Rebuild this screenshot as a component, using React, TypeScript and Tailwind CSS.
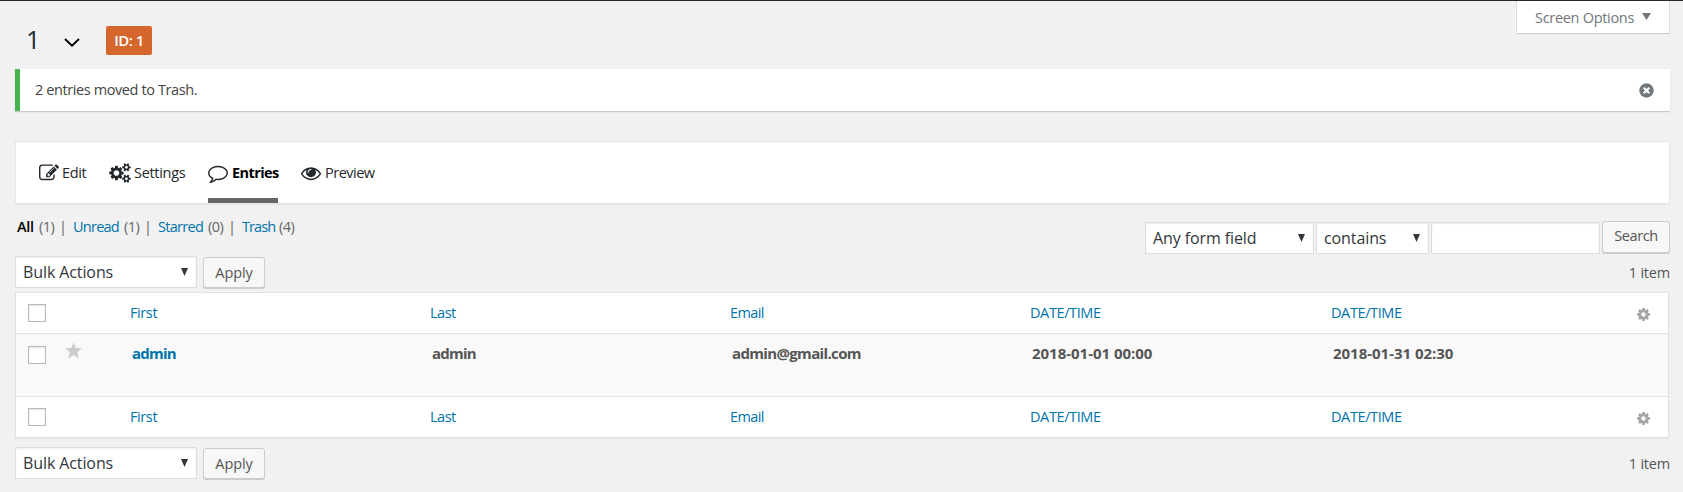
import React from "react";

const columns = [
  { label: "First", value: "admin", link: true, head: "tracking-[-0.4px]", cell: "tracking-[-0.8px]" },
  { label: "Last", value: "admin", link: false, head: "tracking-[-0.5px]", cell: "tracking-[-0.8px]" },
  { label: "Email", value: "admin@gmail.com", link: false, head: "tracking-[-0.6px]", cell: "tracking-[-0.65px]" },
  { label: "DATE/TIME", value: "2018-01-01 00:00", link: false, head: "tracking-[-0.4px]", cell: "tracking-[-0.02px]" },
  { label: "DATE/TIME", value: "2018-01-31 02:30", link: false, head: "tracking-[-0.4px]", cell: "tracking-[-0.02px]" },
];

const icons = {
  edit: "M888 1184l116-116-152-152-116 116v56h96v96h56zm440-720q-16-16-33 1l-350 350q-17 17-1 33t33-1l350-350q17-17 1-33zm80 594v190q0 119-84.5 203.5t-203.5 84.5h-832q-119 0-203.5-84.5t-84.5-203.5v-832q0-119 84.5-203.5t203.5-84.5h832q63 0 117 25 15 7 18 23 3 17-9 29l-49 49q-14 14-32 8-23-6-45-6h-832q-66 0-113 47t-47 113v832q0 66 47 113t113 47h832q66 0 113-47t47-113v-126q0-13 9-22l64-64q15-15 35-7t20 29zm-96-738l288 288-672 672h-288v-288zm444 132l-92 92-288-288 92-92q28-28 68-28t68 28l152 152q28 28 28 68t-28 68z",
  cogs: "M896 896q0-106-75-181t-181-75-181 75-75 181 75 181 181 75 181-75 75-181zm768 512q0-52-38-90t-90-38-90 38-38 90q0 53 37.5 90.5t90.5 37.5 90.5-37.5 37.5-90.5zm0-1024q0-52-38-90t-90-38-90 38-38 90q0 53 37.5 90.5t90.5 37.5 90.5-37.5 37.5-90.5zm-384 421v185q0 10-7 19.5t-16 10.5l-155 24q-11 35-32 76 34 48 90 115 7 11 7 20 0 12-7 19-23 30-82.5 89.5t-78.5 59.5q-11 0-21-7l-115-90q-37 19-77 31-11 108-23 155-7 24-30 24h-186q-11 0-20-7.5t-10-17.5l-23-153q-34-10-75-31l-118 89q-7 7-20 7-11 0-21-8-144-133-144-160 0-9 7-19 10-14 41-53t47-61q-23-44-35-82l-152-24q-10-1-17-9.5t-7-19.5v-185q0-10 7-19.5t16-10.5l155-24q11-35 32-76-34-48-90-115-7-11-7-20 0-12 7-20 22-30 82-89t79-59q11 0 21 7l115 90q34-18 77-32 11-108 23-154 7-24 30-24h186q11 0 20 7.5t10 17.5l23 153q34 10 75 31l118-89q8-7 20-7 11 0 21 8 144 133 144 160 0 8-7 19-12 16-42 54t-45 60q23 48 34 82l152 23q10 2 17 10.5t7 19.5zm640 533v140q0 16-149 31-12 27-30 52 51 113 51 138 0 4-4 7-122 71-124 71-8 0-46-47t-52-68q-20 2-30 2t-30-2q-14 21-52 68t-46 47q-2 0-124-71-4-3-4-7 0-25 51-138-18-25-30-52-149-15-149-31v-140q0-16 149-31 13-29 30-52-51-113-51-138 0-4 4-7 4-2 35-20t59-34 30-16q8 0 46 46.5t52 67.5q20-2 30-2t30 2q51-71 92-112l6-2q4 0 124 70 4 3 4 7 0 25-51 138 17 23 30 52 149 15 149 31zm0-1024v140q0 16-149 31-12 27-30 52 51 113 51 138 0 4-4 7-122 71-124 71-8 0-46-47t-52-68q-20 2-30 2t-30-2q-14 21-52 68t-46 47q-2 0-124-71-4-3-4-7 0-25 51-138-18-25-30-52-149-15-149-31v-140q0-16 149-31 13-29 30-52-51-113-51-138 0-4 4-7 4-2 35-20t59-34 30-16q8 0 46 46.5t52 67.5q20-2 30-2t30 2q51-71 92-112l6-2q4 0 124 70 4 3 4 7 0 25-51 138 17 23 30 52 149 15 149 31z",
  comment: "M896 384q-204 0-381.5 69.5t-282 187.5-104.5 255q0 112 71.5 213.5t201.5 175.5l87 50-27 96q-24 91-70 172 152-63 275-171l43-38 57 6q69 8 130 8 204 0 381.5-69.5t282-187.5 104.5-255-104.5-255-282-187.5-381.5-69.5zm896 512q0 174-120 321.5t-326 233-450 85.5q-70 0-145-8-198 175-460 242-49 14-114 22h-5q-15 0-27-10.5t-16-27.5v-1q-3-4-.5-12t2-10 4.5-9.5l6-9 7-8.5 8-9q7-8 31-34.5t34.5-38 31-39.5 32.5-51 27-59 26-76q-157-89-247.5-220t-90.5-281q0-174 120-321.5t326-233 450-85.5 450 85.5 326 233 120 321.5z",
  eye: "M1664 960q-152-236-381-353 61 104 61 225 0 185-131.5 316.5t-316.5 131.5-316.5-131.5-131.5-316.5q0-121 61-225-229 117-381 353 133 205 333.5 326.5t434.5 121.5 434.5-121.5 333.5-326.5zm-720-384q0-20-14-34t-34-14q-125 0-214.5 89.5t-89.5 214.5q0 20 14 34t34 14 34-14 14-34q0-86 61-147t147-61q20 0 34-14t14-34zm848 384q0 34-20 69-140 230-376.5 368.5t-499.5 138.5-499.5-139-376.5-368q-20-35-20-69t20-69q140-229 376.5-368t499.5-139 499.5 139 376.5 368q20 35 20 69z",
  cog: "M1152 896q0-106-75-181t-181-75-181 75-75 181 75 181 181 75 181-75 75-181zm512-109v222q0 12-8 23t-20 13l-185 28q-19 54-39 91 35 50 107 138 10 12 10 25t-9 23q-27 37-99 108t-94 71q-12 0-26-9l-138-108q-44 23-91 38-16 136-29 186-7 28-36 28h-222q-14 0-24.5-8.5t-11.5-21.5l-28-184q-49-16-90-37l-141 107q-10 9-25 9-14 0-25-11-126-114-165-168-7-10-7-23 0-12 8-23 15-21 51-66.5t54-70.5q-27-50-41-99l-183-27q-13-2-21-12.5t-8-23.5v-222q0-12 8-23t19-13l186-28q14-46 39-92-40-57-107-138-10-12-10-24 0-10 9-23 26-36 98.5-107.5t94.5-71.5q13 0 26 10l138 107q44-23 91-38 16-136 29-186 7-28 36-28h222q14 0 24.5 8.5t11.5 21.5l28 184q49 16 90 37l142-107q9-9 24-9 13 0 25 10 129 119 165 170 7 8 7 22 0 12-8 23-15 21-51 66.5t-54 70.5q26 50 41 98l183 28q13 2 21 12.5t8 23.5z",
};

function Icon({ name, viewBox = "0 0 1792 1792", className }: { name: keyof typeof icons; viewBox?: string; className: string }) {
  return (
    <svg viewBox={viewBox} className={`shrink-0 ${className}`}>
      <path d={icons[name]} fill="currentColor" />
    </svg>
  );
}

function Caret({ className }: { className: string }) {
  return (
    <svg viewBox="0 0 10 8" preserveAspectRatio="none" className={className}>
      <path d="M0 0H10L5 8Z" fill="currentColor" />
    </svg>
  );
}

function SelectBox({ label, width }: { label: string; width: string }) {
  return (
    <div
      className={`flex h-8 shrink-0 items-center justify-between border border-[#ddd] bg-white pl-[7px] pr-[8px] text-[16px] tracking-[-0.1px] text-[#32373c] shadow-[inset_0_1px_2px_rgba(0,0,0,0.07)] ${width}`}
    >
      <span className="whitespace-nowrap">{label}</span>
      <Caret className="h-2 w-[7px]" />
    </div>
  );
}

function Button({ label, className }: { label: string; className: string }) {
  return (
    <button
      className={`shrink-0 rounded-[3px] border border-[#ccc] bg-[#f7f7f7] text-center text-[14.5px] leading-[28px] text-[#555] shadow-[0_1px_0_#ccc] ${className}`}
    >
      {label}
    </button>
  );
}

function Check() {
  return <div className="ml-3 h-[18px] w-[18px] shrink-0 border border-[#b4b9be] bg-white shadow-[inset_0_1px_2px_rgba(0,0,0,0.1)]" />;
}

function LabelRow() {
  return (
    <div className="flex h-10 items-start bg-white">
      <div className="mt-[11px] w-[114px]"><Check /></div>
      {columns.map((c, i) => (
        <div key={i} className={`mt-[10px] text-[#0073aa] ${i < 3 ? "w-[300px]" : "w-[301px]"} ${c.head}`}>{c.label}</div>
      ))}
      <Icon name="cog" viewBox="128 128 1536 1536" className="ml-[5px] mt-[15px] h-[13px] w-[13px] text-[#a6a6a6]" />
    </div>
  );
}

function BulkBar() {
  return (
    <div className="flex h-[33px] items-start">
      <SelectBox label="Bulk Actions" width="w-[182px]" />
      <Button label="Apply" className="ml-[6px] mt-px h-[31px] w-[62px] tracking-[-0.1px]" />
      <div className="ml-auto mt-[6px] leading-[22px] tracking-[-0.2px] text-[#555]">1 item</div>
    </div>
  );
}

function Filter({ name, count, nameClass, last = false }: { name: string; count: number; nameClass: string; last?: boolean }) {
  return (
    <div className="flex">
      <span className={nameClass}>{name}</span>
      <span className="w-5 tracking-[-0.6px] text-[#666]">({count})</span>
      {!last && <span className="w-[14px] text-[#666]">|</span>}
    </div>
  );
}

export default function App() {
  return (
    <div className="h-[492px] overflow-hidden border-t border-[#23282d] bg-[#f1f1f1] pl-[15px] pr-[13px] font-['Open_Sans',sans-serif] text-[14.5px] leading-5 text-[#444]">
      <header className="flex h-[68px] items-start">
        <h1 className="ml-[11px] mt-[22px] w-[38px] text-[25px] font-normal leading-8 text-[#23282d]">1</h1>
        <svg viewBox="0 0 16 9" className="mt-[37px] h-[9px] w-4 text-black">
          <path d="M1 1L8 7.6L15 1" fill="none" stroke="currentColor" strokeWidth="1.9" />
        </svg>
        <div className="ml-[26px] mt-[25px] h-[29px] w-[46px] rounded-[2px] bg-[#d5672c] text-center text-[15px] font-semibold leading-[28px] tracking-[-0.5px] text-white">ID: 1</div>
        <div className="ml-auto flex h-[33px] w-[154px] items-center border border-t-0 border-[#ddd] border-b-[#ccc] bg-white pl-[18px] pt-px text-[#72777c]">
          <span className="w-[107px] whitespace-nowrap tracking-[-0.3px]">Screen Options</span>
          <Caret className="-mt-[3px] h-[7px] w-[9px]" />
        </div>
      </header>

      <div className="flex h-[42px] items-start border-l-[5px] border-[#46b450] bg-white pl-[15px] pr-4 shadow-[0_1px_1px_rgba(0,0,0,0.16)]">
        <span className="mt-[11px] tracking-[-0.4px]">2 entries moved to Trash.</span>
        <svg viewBox="0 0 16 16" className="ml-auto mt-[14px] h-[15px] w-[15px]">
          <circle cx="8" cy="8" r="7.7" fill="#72777c" />
          <path d="M5 5L11 11M11 5L5 11" stroke="#fff" strokeWidth="2.4" />
        </svg>
      </div>

      <nav className="mt-[30px] flex h-[63px] border border-[#e5e5e5] bg-white pl-[22px] text-[#23282d] shadow-[0_1px_1px_rgba(0,0,0,0.04)]">
        <div className="flex w-[71px] items-start">
          <Icon name="edit" className="ml-px mt-[21px] h-5 w-5" />
          <span className="ml-[3px] mt-[21px] tracking-[-0.4px]">Edit</span>
        </div>
        <div className="flex w-[99px] items-start">
          <Icon name="cogs" viewBox="0 0 1920 1792" className="mt-[21px] h-5 w-[22px]" />
          <span className="ml-[3px] mt-[21px] tracking-[-0.3px]">Settings</span>
        </div>
        <div className="flex w-[70px] items-start border-b-[5px] border-[#666]">
          <Icon name="comment" className="mt-[21px] h-5 w-5" />
          <span className="ml-[4px] mt-[21px] font-bold tracking-[-0.6px] text-black">Entries</span>
        </div>
        <div className="ml-[23px] flex items-start">
          <Icon name="eye" className="mt-[21px] h-5 w-5" />
          <span className="ml-[4px] mt-[21px] tracking-[-0.5px]">Preview</span>
        </div>
      </nav>

      <div className="flex h-[52px] justify-between">
        <div className="ml-[2px] mt-[13px] flex whitespace-nowrap">
          <Filter name="All" count={1} nameClass="w-[22px] font-semibold tracking-[-0.3px] text-black" />
          <Filter name="Unread" count={1} nameClass="w-[51px] text-[#0073aa] tracking-[-0.75px]" />
          <Filter name="Starred" count={0} nameClass="w-[50px] text-[#0073aa] tracking-[-0.7px]" />
          <Filter name="Trash" count={4} nameClass="w-[37px] text-[#0073aa] tracking-[-0.9px]" last />
        </div>
        <div className="mt-[18px] flex items-start gap-[2px]">
          <SelectBox label="Any form field" width="w-[169px]" />
          <SelectBox label="contains" width="w-[113px]" />
          <div className="h-8 w-[169px] border border-[#ddd] bg-white shadow-[inset_0_1px_2px_rgba(0,0,0,0.07)]" />
          <Button label="Search" className="-mt-[1px] h-8 w-[68px] pb-[2px] tracking-[-0.4px]" />
        </div>
      </div>

      <BulkBar />

      <section className="mb-[9px] mr-px mt-[3px] h-[146px] border border-[#e1e1e1] bg-white shadow-[0_1px_1px_rgba(0,0,0,0.04)]">
        <LabelRow />
        <div className="flex h-16 items-start border-y border-[#e1e1e1] bg-[#f9f9f9]">
          <div className="mt-3 w-[49px]"><Check /></div>
          <svg viewBox="0 0 20 20" className="mt-[8px] h-[17px] w-[17px] text-[#ccc]">
            <path d="M10 0.5L12.7 7.2L20 7.6L14.3 12.2L16.2 19.3L10 15.3L3.8 19.3L5.7 12.2L0 7.6L7.3 7.2Z" fill="currentColor" />
          </svg>
          <div className="ml-[50px] mt-[9px] flex text-[15px] font-bold text-[#555]">
            {columns.map((c, i) => (
              <div key={i} className={`${i < 3 ? "w-[300px]" : "w-[301px]"} ${c.cell} ${c.link ? "text-[#0073aa]" : ""}`}>{c.value}</div>
            ))}
          </div>
        </div>
        <LabelRow />
      </section>

      <BulkBar />
    </div>
  );
}
